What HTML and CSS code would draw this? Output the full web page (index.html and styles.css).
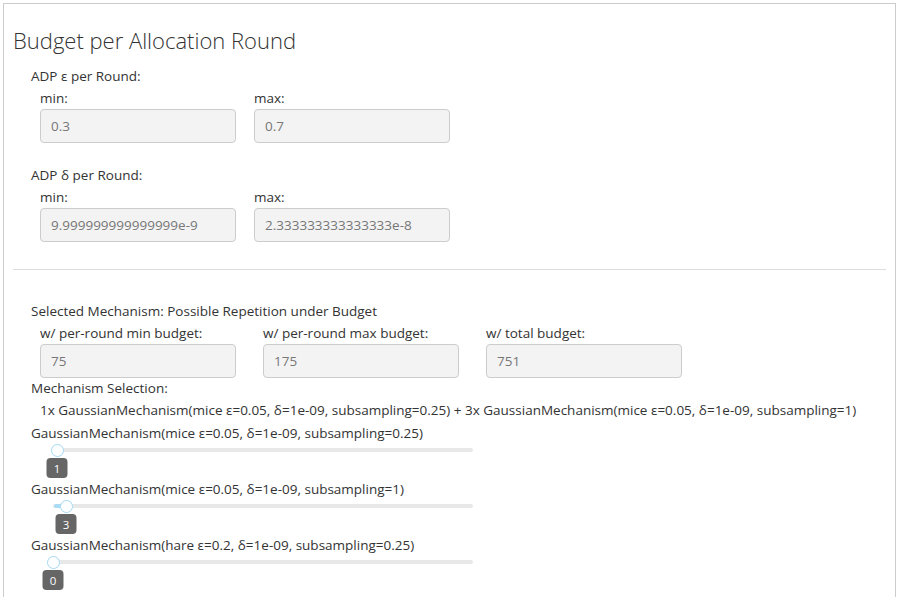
FILE: index.html
```html
<!DOCTYPE html>
<html>
<head>
<meta charset="utf-8">
<link rel="stylesheet" href="styles.css">
</head>
<body>
<div class="panel">
  <h3 class="title">Budget per Allocation Round</h3>

  <div class="group">
    <div class="glabel">ADP ε per Round:</div>
    <div class="row gap18">
      <div class="field"><div class="flabel">min:</div><div class="inp">0.3</div></div>
      <div class="field"><div class="flabel">max:</div><div class="inp">0.7</div></div>
    </div>
  </div>

  <div class="group g2">
    <div class="glabel">ADP δ per Round:</div>
    <div class="row gap18">
      <div class="field"><div class="flabel">min:</div><div class="inp">9.999999999999999e-9</div></div>
      <div class="field"><div class="flabel">max:</div><div class="inp">2.333333333333333e-8</div></div>
    </div>
  </div>

  <hr class="sep">

  <div class="group g3">
    <div class="glabel">Selected Mechanism: Possible Repetition under Budget</div>
    <div class="row gap27">
      <div class="field"><div class="flabel">w/ per-round min budget:</div><div class="inp">75</div></div>
      <div class="field"><div class="flabel">w/ per-round max budget:</div><div class="inp">175</div></div>
      <div class="field"><div class="flabel">w/ total budget:</div><div class="inp">751</div></div>
    </div>
    <div class="glabel sel">Mechanism Selection:</div>
    <div class="summary">1x GaussianMechanism(mice ε=0.05, δ=1e-09, subsampling=0.25) + 3x GaussianMechanism(mice ε=0.05, δ=1e-09, subsampling=1)</div>

    <div class="glabel">GaussianMechanism(mice ε=0.05, δ=1e-09, subsampling=0.25)</div>
    <div class="slider">
      <div class="track"></div>
      <div class="fill" style="width:4px"></div>
      <div class="handle" style="left:4px"></div>
      <div class="badge" style="left:4px">1</div>
    </div>

    <div class="glabel">GaussianMechanism(mice ε=0.05, δ=1e-09, subsampling=1)</div>
    <div class="slider">
      <div class="track"></div>
      <div class="fill" style="width:13px"></div>
      <div class="handle" style="left:13px"></div>
      <div class="badge" style="left:13px">3</div>
    </div>

    <div class="glabel">GaussianMechanism(hare ε=0.2, δ=1e-09, subsampling=0.25)</div>
    <div class="slider">
      <div class="track"></div>
      <div class="fill" style="width:0px"></div>
      <div class="handle" style="left:0px"></div>
      <div class="badge" style="left:0px">0</div>
    </div>
  </div>
</div>
</body>
</html>
```

FILE: styles.css
```css
html, body {
  margin: 0;
  padding: 0;
  background: #fff;
}
body {
  font-family: "Open Sans", "DejaVu Sans", sans-serif;
  font-size: 13.5px;
  color: #333;
  overflow: hidden;
}
.panel {
  margin: 3px 0 0 3px;
  width: 893px;
  height: 700px;
  border: 1px solid #ccc;
  padding: 0 9px;
  box-sizing: border-box;
}
.title {
  margin: 0;
  padding-top: 22px;
  height: 61px;
  box-sizing: border-box;
  font-size: 22px;
  font-weight: 300;
  line-height: 28px;
  color: #333;
}
.group {
  padding-left: 18px;
}
.g2 {
  margin-top: 21px;
}
.g3 {
  margin-top: 30px;
}
.glabel {
  line-height: 22px;
  height: 22px;
  white-space: nowrap;
}
.row {
  display: flex;
  padding-left: 9px;
}
.gap18 { gap: 18px; }
.gap27 { gap: 27px; }
.field {
  width: 196px;
}
.flabel {
  line-height: 22px;
  height: 22px;
  white-space: nowrap;
}
.inp {
  height: 34px;
  box-sizing: border-box;
  border: 1px solid #ccc;
  border-radius: 4px;
  background: #f3f3f3;
  color: #777;
  padding: 0 10px;
  line-height: 32px;
}
.sel {
  margin-top: -1px;
}
.summary {
  padding-left: 9px;
  line-height: 22px;
  height: 22px;
  white-space: nowrap;
}
.summary + .glabel {
  margin-top: 1px;
}
.slider {
  position: relative;
  height: 34px;
  margin-left: 22px;
  width: 420px;
}
.track {
  position: absolute;
  left: 0;
  right: 0;
  top: 4px;
  height: 4px;
  border-radius: 2px;
  background: #e8e8e8;
}
.fill {
  position: absolute;
  left: 1px;
  top: 4px;
  height: 4px;
  border-radius: 2px;
  background: #a9dcf4;
}
.handle {
  position: absolute;
  top: -0.5px;
  width: 13px;
  height: 13px;
  margin-left: -6.5px;
  box-sizing: border-box;
  border: 1.5px solid #a3d9f3;
  border-radius: 50%;
  background: #fff;
}
.badge {
  position: absolute;
  top: 14px;
  height: 20px;
  min-width: 21px;
  transform: translateX(-50%);
  padding: 0 6px;
  box-sizing: border-box;
  border-radius: 4px;
  background: #666;
  color: #fff;
  font-size: 11.5px;
  line-height: 21px;
  text-align: center;
}
.sep {
  margin: 27px 0 0 0;
  border: 0;
  border-top: 1px solid #ddd;
  height: 0;
}
```
